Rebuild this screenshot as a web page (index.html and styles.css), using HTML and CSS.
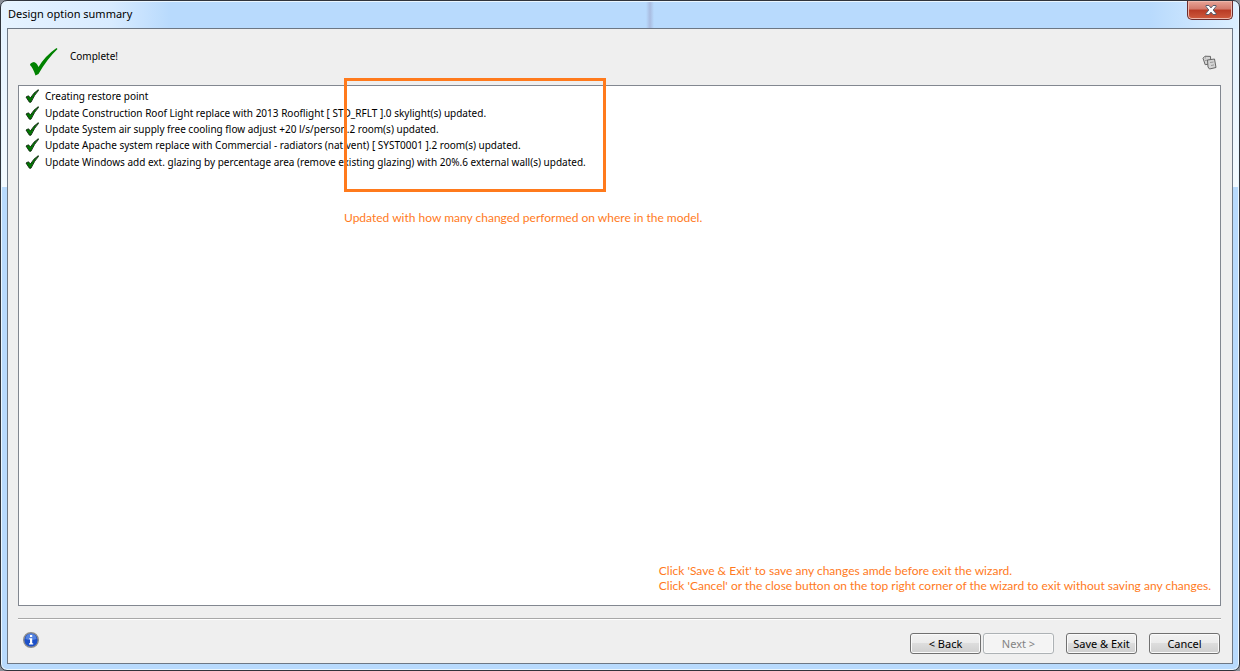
FILE: index.html
```html
<!DOCTYPE html>
<html lang="en">
<head>
	<meta charset="utf-8">
	<title>Design option summary</title>
	<link rel="stylesheet" href="styles.css">
</head>
<body>
	<svg class="symbols" aria-hidden="true">
		<symbol id="tick" viewBox="0 0 14 14">
			<path d="M1 8 L3.5 6.8 L5.4 9 Q8.5 3.5 13.3 0.7 L13.6 1.3 Q9.5 5.5 6 13.2 L4.4 13.2 Z" fill="#007800" stroke="#102810" stroke-width="0.9"/>
		</symbol>
	</svg>
	<div class="window">
		<header class="titlebar">
			<h1>Design option summary</h1>
			<button type="button" class="close" aria-label="Close">
				<svg width="14" height="12" viewBox="0 0 14 12"><path d="M2 1.5h3l2 2.4 2-2.4h3v1L9.2 6 12 9.5v1H9L7 8.1 5 10.5H2v-1L4.8 6 2 2.5z" fill="#fff" stroke="#565e6e"/></svg>
			</button>
		</header>
		<main class="client">
			<div class="heading">
				<svg class="big-tick" width="30" height="30" viewBox="0 0 30 30"><path d="M1 18 Q1 16 5 15 Q8 16 9.5 20 Q16 9 27.5 1 L28.5 2 Q18 12 9.5 27 L6.5 28.5 Q4 21 1 18Z" fill="#008200"/></svg>
				<h2>Complete!</h2>
				<button type="button" class="copy" aria-label="Copy to clipboard">
					<svg width="15" height="15" viewBox="0 0 15 15" fill="#d4d4d4" stroke="#666">
						<path d="M1 3.2 3 1.2l5.5.2.4 7.3-5.7 1z"/>
						<path d="M2.8 3.5 4 2.5M3 5.5l3-.4" stroke="#999"/>
						<path d="M5.5 5 12.5 4 14 12.5 7.5 14 6 12z"/>
						<path d="M8 7.5 11.5 7M9 10.5l3-.6" stroke="#999"/>
					</svg>
				</button>
			</div>
			<div class="log">
				<ul>
					<li><svg><use href="#tick"/></svg>Creating restore point</li>
					<li><svg><use href="#tick"/></svg>Update Construction Roof Light replace with 2013 Rooflight [ STD_RFLT ].0 skylight(s) updated.</li>
					<li><svg><use href="#tick"/></svg>Update System air supply free cooling flow adjust +20 l/s/person.2 room(s) updated.</li>
					<li><svg><use href="#tick"/></svg>Update Apache system replace with Commercial - radiators (nat vent) [ SYST0001 ].2 room(s) updated.</li>
					<li><svg><use href="#tick"/></svg>Update Windows add ext. glazing by percentage area (remove existing glazing) with 20%.6 external wall(s) updated.</li>
				</ul>
				<div class="highlight"></div>
				<p class="note note-results">Updated with how many changed performed on where in the model.</p>
				<p class="note note-exit">Click 'Save &amp; Exit' to save any changes amde before exit the wizard.<br>Click 'Cancel' or the close button on the top right corner of the wizard to exit without saving any changes.</p>
			</div>
			<footer class="actions">
				<button type="button" class="info" aria-label="Information">
					<svg width="16" height="16" viewBox="0 0 16 16">
						<circle cx="8" cy="8" r="7.3" fill="#1d50c8" stroke="#8d8d8d" stroke-width="1.4"/>
						<path d="M2.5 7a5.5 5.5 0 0 1 11 0Q8 9 2.5 7z" fill="#5583e0"/>
						<path d="M7 3h2.2v2H7zM6.2 6.2h3v5h1v1.2H6v-1.2h1V7.3h-.8z" fill="#fff"/>
					</svg>
				</button>
				<button type="button" class="btn">&lt; Back</button>
				<button type="button" class="btn next" disabled>Next &gt;</button>
				<button type="button" class="btn save">Save &amp; Exit</button>
				<button type="button" class="btn cancel">Cancel</button>
			</footer>
		</main>
	</div>
</body>
</html>
```
FILE: styles.css
```css
* {
	box-sizing: border-box;
}
body {
	margin: 0;
	background-color: #8a8f98;
	font-family: "Noto Sans", Tahoma, sans-serif;
	font-size: 10px;
	line-height: 16px;
	color: #000;
}
h1, h2, p, ul {
	margin: 0;
	padding: 0;
	font-size: 10px;
	font-weight: normal;
}
button {
	font: inherit;
	color: inherit;
}
.symbols {
	display: none;
}
.window {
	display: flex;
	flex-direction: column;
	min-height: 100vh;
	padding: 0 6px 6px;
	border: 1px solid #30343c;
	border-radius: 7px;
	box-shadow: inset 0 0 0 1px #eaf6ff;
	background:
		linear-gradient(90deg, #e6f3ff, #d8ebff 110px, transparent 170px) 0 0 / 100% 28px no-repeat,
		linear-gradient(90deg, transparent, #a9bce0, transparent) 645px 0 / 8px 28px no-repeat,
		linear-gradient(270deg, #dcefff, transparent 90px) 0 0 / 100% 28px no-repeat,
		linear-gradient(#b8dafd, #b8dafd) 0 0 / 100% 28px no-repeat,
		linear-gradient(#e0f0ff, #f4faff) 0 0 / 100% 186px no-repeat,
		#b8dafd;
}
.titlebar {
	display: flex;
	align-items: flex-start;
	justify-content: space-between;
	height: 27px;
}
.titlebar h1 {
	padding: 5px 1px;
	font-size: 11px;
}
.close {
	display: flex;
	align-items: center;
	justify-content: center;
	width: 46px;
	height: 19px;
	padding: 0 0 0 2px;
	border: 1px solid #6b2d2d;
	border-top: 0;
	border-radius: 0 0 5px 5px;
	box-shadow: inset 0 0 0 1px #eeb7ab;
	background: linear-gradient(#e8a497, #d3796a 45%, #b83a24 50%, #cf5b3e);
}
.client {
	flex: 1;
	display: flex;
	flex-direction: column;
	padding: 0 11px 9px 10px;
	border: 1px solid #6d7784;
	background-color: #efefef;
}
.heading {
	display: flex;
	height: 56px;
	padding-left: 10px;
}
.big-tick {
	margin: 18px 11px 0 1px;
}
.heading h2 {
	padding-top: 19px;
}
.copy {
	align-self: flex-end;
	display: flex;
	margin: 0 4px 15px auto;
	padding: 0;
	border: 0;
	background: none;
}
.log {
	flex: 1;
	position: relative;
	border: 1px solid #828790;
	background-color: #fff;
}
.log ul {
	display: grid;
	grid-auto-rows: 1fr;
	height: 86px;
	padding: 2px 6px;
	list-style: none;
}
.log li {
	display: flex;
	align-items: center;
	gap: 6px;
	white-space: nowrap;
}
.log li svg {
	width: 14px;
	height: 14px;
}
.highlight {
	position: absolute;
	top: -8px;
	left: 325px;
	width: 262px;
	height: 114px;
	border: 3px solid #ff7a1c;
}
.note {
	position: absolute;
	font-family: Lato, Calibri, sans-serif;
	font-size: 12px;
	line-height: 15px;
	white-space: nowrap;
	color: #ff7a1c;
}
.note-results {
	top: 124px;
	left: 325px;
}
.note-exit {
	right: 9px;
	bottom: 12px;
}
.actions {
	display: flex;
	align-items: flex-end;
	height: 36px;
	margin-top: 12px;
	padding: 0 1px 0 5px;
	border-top: 1px solid #a8a8a8;
	box-shadow: inset 0 1px 0 #fff;
}
.info {
	display: flex;
	margin: 0 auto 6px 0;
	padding: 0;
	border: 0;
	background: none;
}
.btn {
	width: 71px;
	height: 21px;
	padding: 0;
	border: 1px solid #707070;
	border-radius: 3px;
	box-shadow: inset 0 0 0 1px #fafafa;
	background: linear-gradient(#f2f2f2, #ebebeb 50%, #dddddd 50%, #cfcfcf);
	font-size: 11px;
	line-height: 19px;
}
.next {
	margin-left: 2px;
}
.save, .cancel {
	margin-left: 12px;
}
.btn:disabled {
	border-color: #adb2b5;
	background: #f4f4f4;
	color: #838383;
}
```
